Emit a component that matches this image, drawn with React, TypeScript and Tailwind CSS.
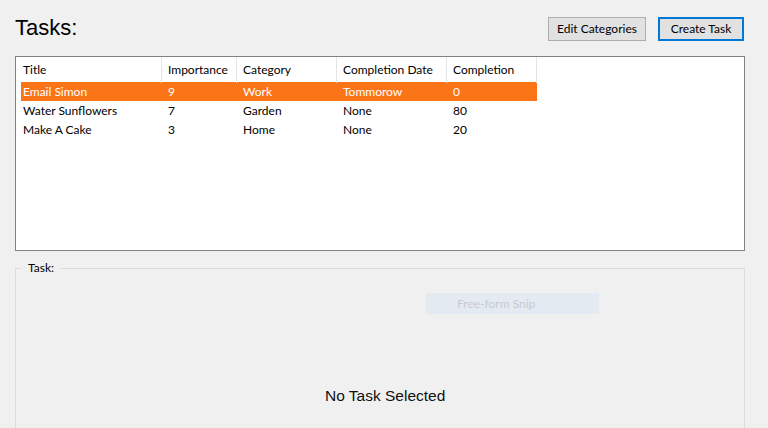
import React from "react";

const rows = [
  ["Email Simon", "9", "Work", "Tommorow", "0"],
  ["Water Sunflowers", "7", "Garden", "None", "80"],
  ["Make A Cake", "3", "Home", "None", "20"],
];

const headers = ["Title", "Importance", "Category", "Completion Date", "Completion"];

export default function App() {
  const ui = { fontFamily: "Lato, 'Open Sans', sans-serif" };
  return (
    <div
      className="w-[768px] h-[428px] bg-[#f0f0f0] overflow-hidden flex flex-col pl-[15px] text-black"
      style={{ fontFamily: "'Liberation Sans', Arial, sans-serif" }}
    >
      <div className="h-[56px] flex items-start justify-between pr-[24px] shrink-0">
        <div className="mt-[17px] text-[22px] leading-[22px]">Tasks:</div>
        <div className="mt-[17px] flex gap-[12px]" style={ui}>
          <button className="w-[98px] h-[24px] border border-[#adadad] bg-[#e1e1e1] text-[12px] leading-[22px]">
            Edit Categories
          </button>
          <button className="w-[86px] h-[24px] border-2 border-[#0078d7] bg-[#e1e1e1] text-[12px] leading-[20px]">
            Create Task
          </button>
        </div>
      </div>

      <div
        className="mr-[23px] h-[195px] border border-[#828282] bg-white shrink-0 text-[12px]"
        style={ui}
      >
        <div className="grid grid-cols-[146px_75px_100px_110px_90px] h-[25px]">
          {headers.map((h, i) => (
            <div
              key={h}
              className={`border-r border-[#e5e5e5] leading-[26px] ${i === 0 ? "pl-[7px]" : "pl-[6px]"}`}
            >
              {h}
            </div>
          ))}
        </div>
        {rows.map((r, ri) => (
          <div
            key={ri}
            className={`ml-[5px] w-[516px] h-[19px] grid grid-cols-[141px_75px_100px_110px_90px] leading-[19px] ${
              ri === 0 ? "bg-[#fb7417] text-white" : ""
            }`}
          >
            {r.map((c, ci) => (
              <div key={ci} className={ci === 0 ? "pl-[2px]" : "pl-[6px]"}>
                {c}
              </div>
            ))}
          </div>
        ))}
      </div>

      <fieldset className="mt-[9px] mr-[23px] h-[220px] border border-[#dcdcdc] shrink-0 flex flex-col">
        <legend className="ml-[5px] px-[7px] text-[12px] leading-[16px]" style={ui}>
          Task:
        </legend>
        <div
          className="mt-[17px] ml-[410px] w-[173px] h-[21px] bg-[#e4eaf2] text-[#c6cad0] text-[12px] leading-[21px] pl-[31px]"
          style={ui}
        >
          Free-form Snip
        </div>
        <div className="mt-[73px] ml-[309px] text-[15.5px] leading-[18px] text-[#111]">
          No Task Selected
        </div>
      </fieldset>
    </div>
  );
}
